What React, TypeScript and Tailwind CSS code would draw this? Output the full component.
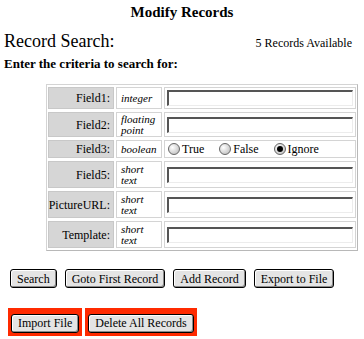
import React from 'react';

const serif = { fontFamily: '"Liberation Serif", "Times New Roman", serif' };

const Btn = ({ label }: { label: string }) => (
  <button className="h-[19px] px-[6px] rounded-[3px] border border-black bg-[#e4e4e4] text-[12px] leading-none text-black shadow-[inset_1px_1px_0_#ffffff,inset_-1px_-1px_0_#8a8a8a]">
    {label}
  </button>
);

const Field = () => (
  <div className="h-[16px] w-full border border-[#ececec] border-t-[#555] border-l-[#555] border-t-2 border-l-2 bg-white" />
);

const Radio = ({ label, on }: { label: string; on?: boolean }) => (
  <span className="flex items-center gap-[2px]">
    <span className="w-[12px] h-[12px] rounded-full border border-[#666] bg-[radial-gradient(circle_at_35%_35%,#ffffff,#b5b5b5)] flex items-center justify-center">
      {on && <span className="w-[6px] h-[6px] rounded-full bg-black" />}
    </span>
    {label}
  </span>
);

const rows = [
  { name: 'Field1:', type: ['integer'], h: 'h-[22px]' },
  { name: 'Field2:', type: ['floating', 'point'], h: 'h-[25px]' },
  { name: 'Field3:', type: ['boolean'], h: 'h-[18px]', radio: true },
  { name: 'Field5:', type: ['short', 'text'], h: 'h-[27px]' },
  { name: 'PictureURL:', type: ['short', 'text'], h: 'h-[27px]' },
  { name: 'Template:', type: ['short', 'text'], h: 'h-[27px]' },
];

export default function App() {
  return (
    <div className="w-[364px] h-[339px] bg-white text-black overflow-hidden" style={serif}>
      <h1 className="text-center font-bold text-[15px] leading-none pt-[5px]">Modify Records</h1>
      <div className="flex items-baseline justify-between px-[4px] mt-[12px]">
        <span className="text-[18px] leading-none">Record Search:</span>
        <span className="text-[12px] leading-none pr-[8px]">5 Records Available</span>
      </div>
      <p className="text-[13px] font-bold leading-none px-[4px] mt-[7px]">Enter the criteria to search for:</p>

      <div className="ml-[46px] mr-[6px] mt-[14px] border border-[#d4d4d4] border-r-[#b8b8b8] border-b-[#b8b8b8] px-[1px] py-[2px]">
        <div className="flex flex-col gap-[3px]">
          {rows.map((r) => (
            <div key={r.name} className={`flex gap-[2px] ${r.h}`}>
              <div className="w-[66px] shrink-0 bg-[#d6d6d6] border border-[#c8c8c8] flex items-center justify-end pr-[3px] text-[12px]">
                {r.name}
              </div>
              <div className="w-[46px] shrink-0 border border-[#d4d4d4] flex flex-col justify-center pl-[4px] text-[11px] italic leading-[11px]">
                {r.type.map((t) => (
                  <span key={t}>{t}</span>
                ))}
              </div>
              <div className="flex-1 border border-[#d4d4d4] flex items-center px-[2px] text-[12px]">
                {r.radio ? (
                  <div className="flex items-center gap-[15px] pl-[1px]">
                    <Radio label="True" />
                    <Radio label="False" />
                    <Radio label="Ignore" on />
                  </div>
                ) : (
                  <Field />
                )}
              </div>
            </div>
          ))}
        </div>
      </div>

      <div className="flex gap-[8px] px-[10px] mt-[18px]">
        <Btn label="Search" />
        <Btn label="Goto First Record" />
        <Btn label="Add Record" />
        <Btn label="Export to File" />
      </div>
      <div className="flex gap-[3px] px-[8px] mt-[20px]">
        <div className="bg-[#ff2a00] px-[3px] py-[2px]">
          <Btn label="Import File" />
        </div>
        <div className="bg-[#ff2a00] px-[3px] py-[2px]">
          <Btn label="Delete All Records" />
        </div>
      </div>
    </div>
  );
}
